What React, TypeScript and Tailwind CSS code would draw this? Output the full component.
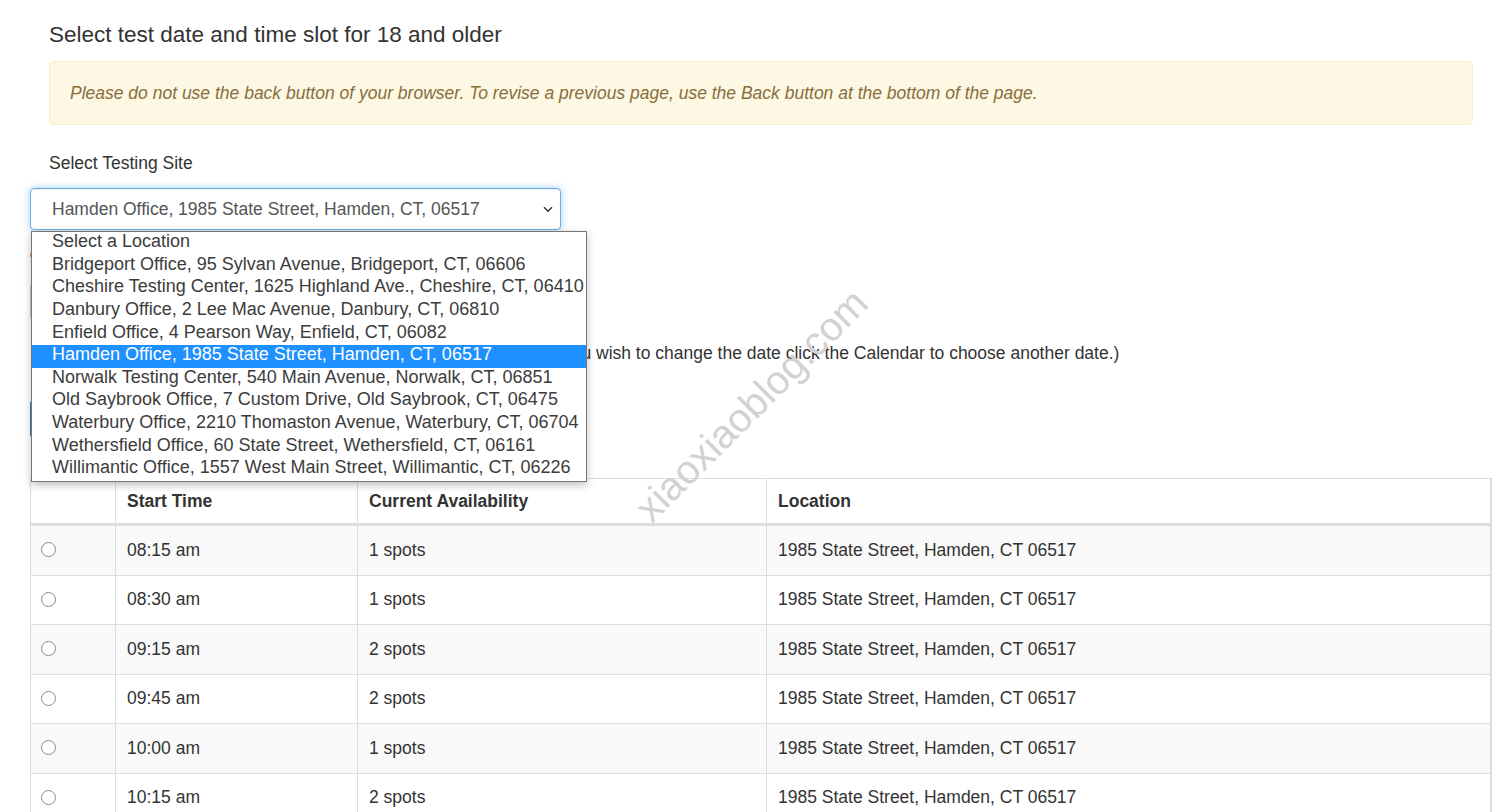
import React from "react";

const sites = [
  "Select a Location",
  "Bridgeport Office, 95 Sylvan Avenue, Bridgeport, CT, 06606",
  "Cheshire Testing Center, 1625 Highland Ave., Cheshire, CT, 06410",
  "Danbury Office, 2 Lee Mac Avenue, Danbury, CT, 06810",
  "Enfield Office, 4 Pearson Way, Enfield, CT, 06082",
  "Hamden Office, 1985 State Street, Hamden, CT, 06517",
  "Norwalk Testing Center, 540 Main Avenue, Norwalk, CT, 06851",
  "Old Saybrook Office, 7 Custom Drive, Old Saybrook, CT, 06475",
  "Waterbury Office, 2210 Thomaston Avenue, Waterbury, CT, 06704",
  "Wethersfield Office, 60 State Street, Wethersfield, CT, 06161",
  "Willimantic Office, 1557 West Main Street, Willimantic, CT, 06226",
];

const slots = [
  ["08:15 am", "1 spots"],
  ["08:30 am", "1 spots"],
  ["09:15 am", "2 spots"],
  ["09:45 am", "2 spots"],
  ["10:00 am", "1 spots"],
  ["10:15 am", "2 spots"],
];

export default function App() {
  return (
    <div className="relative min-h-screen bg-white font-['Liberation_Sans',Arial,sans-serif] text-[17.5px] text-[#333]">
      <div className="pl-[30px] pt-[22px] pb-[20px]">
        <h3 className="ml-[19px] text-[22.5px] leading-[25px] text-[#333]">
          Select test date and time slot for 18 and older
        </h3>
        <div className="ml-[19px] mt-[14px] flex h-[64px] w-[1424px] items-center rounded-[5px] border border-[#faebcc] bg-[#fcf8e3] px-[20px] italic text-[#8a6d3b]">
          Please do not use the back button of your browser. To revise a previous page, use the Back button at the bottom of the page.
        </div>
        <div className="ml-[19px] mt-[25.5px] leading-[25px]">Select Testing Site</div>

        <div className="relative mt-[12.5px] w-[531px]">
          <div className="flex h-[42px] items-center justify-between rounded-[4px] border border-[#66afe9] bg-white pl-[21px] pr-[7px] text-[#555] shadow-[inset_0_1px_1px_rgba(0,0,0,0.075),0_0_8px_rgba(102,175,233,0.6)]">
            <span>Hamden Office, 1985 State Street, Hamden, CT, 06517</span>
            <svg width="10" height="7" viewBox="0 0 10 7">
              <path d="M1 1.2 L5 5.2 L9 1.2" fill="none" stroke="#333" strokeWidth="1.5" />
            </svg>
          </div>
          <div className="absolute left-[1px] top-[43px] z-20 w-[556px] border border-[#767676] bg-white text-[18px] text-[#3c3c3c] shadow-[0_3px_8px_rgba(0,0,0,0.25)]">
            {sites.map((s, i) => (
              <div
                key={s}
                className={
                  i === 5
                    ? "flex h-[22.6px] items-center whitespace-nowrap bg-[#1e90ff] pb-[3px] pl-[20px] text-white"
                    : "flex h-[22.6px] items-center whitespace-nowrap pb-[3px] pl-[20px]"
                }
              >
                {s}
              </div>
            ))}
          </div>
        </div>

        <div className="mt-[23px] h-[4px] w-[3px] bg-[#e8963a]" />
        <div className="mt-[26px] h-[37px] w-[300px] rounded-[4px] border border-[#ccc] bg-white" />
        <p className="ml-[19px] mt-[20.5px] leading-[25px]">
          Available time slots for Tuesday, July 27, 2021 are listed below. (If you wish to change the date click the Calendar to choose another date.)
        </p>
        <div className="mt-[34.5px] h-[38px] w-[180px] rounded-[4px] bg-[#337ab7]" />

        <div className="mt-[40px] w-[1462px] border-l border-r-2 border-t border-[#ddd]">
          <div className="grid h-[47px] grid-cols-[84px_242px_409px_1fr] border-b-[3px] border-[#ddd] font-bold">
            <div />
            <div className="flex items-center border-l border-[#ddd] px-[11px]">Start Time</div>
            <div className="flex items-center border-l border-[#ddd] px-[11px]">Current Availability</div>
            <div className="flex items-center border-l border-[#ddd] px-[11px]">Location</div>
          </div>
          {slots.map(([t, s], i) => (
            <div
              key={t}
              className={
                i % 2 === 0
                  ? "grid h-[49.5px] grid-cols-[84px_242px_409px_1fr] border-b border-[#ddd] bg-[#f9f9f9]"
                  : "grid h-[49.5px] grid-cols-[84px_242px_409px_1fr] border-b border-[#ddd] bg-white"
              }
            >
              <div className="flex items-center pb-[1px] pl-[10px]">
                <span className="block h-[15px] w-[15px] rounded-full border-[1.5px] border-[#8a8a8a] bg-white" />
              </div>
              <div className="flex items-center border-l border-[#ddd] pb-[1px] px-[11px]">{t}</div>
              <div className="flex items-center border-l border-[#ddd] pb-[1px] px-[11px]">{s}</div>
              <div className="flex items-center border-l border-[#ddd] pb-[1px] px-[11px]">1985 State Street, Hamden, CT 06517</div>
            </div>
          ))}
        </div>
      </div>

      <div className="pointer-events-none absolute left-[751px] top-[405px] z-30 -translate-x-1/2 -translate-y-1/2 -rotate-45 whitespace-nowrap text-[40px] leading-none text-[#d2d2d2]">
        xiaoxiaoblog.com
      </div>
    </div>
  );
}
